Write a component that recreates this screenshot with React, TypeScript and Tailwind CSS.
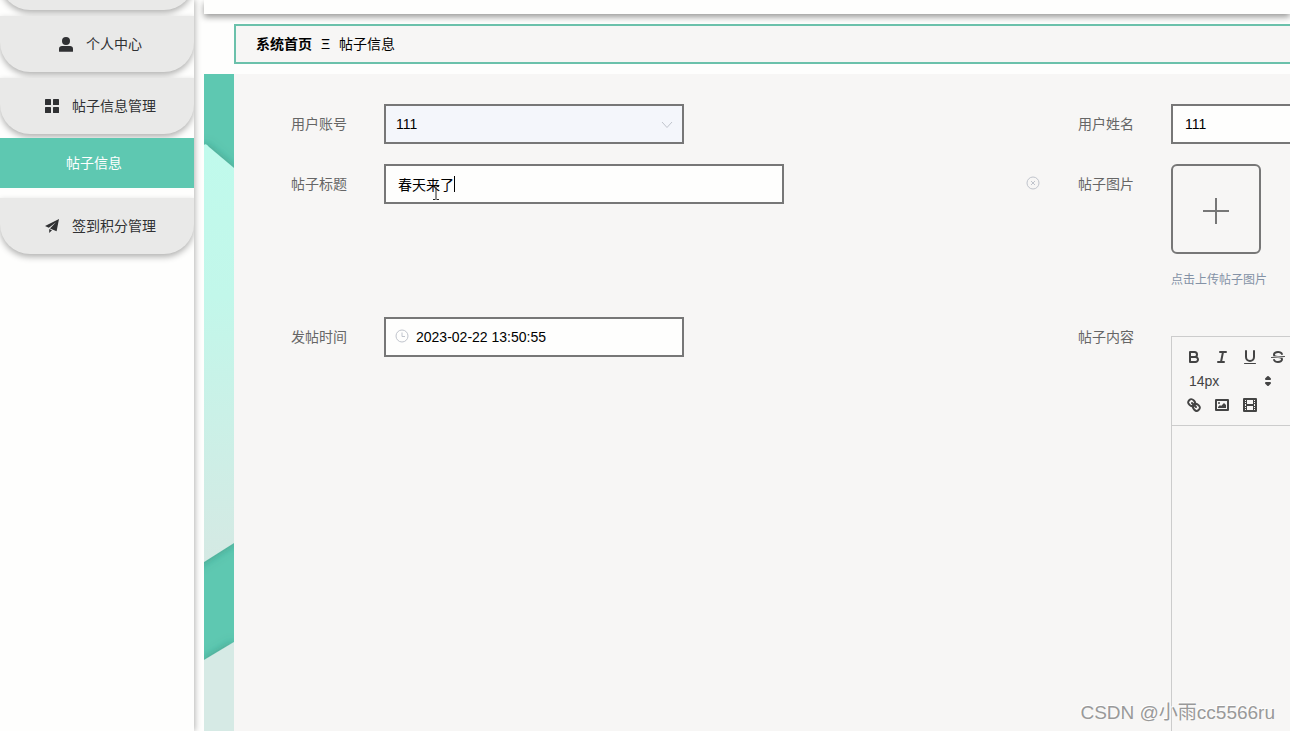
import React, { useState } from 'react';

const menuItems = [
  { label: '个人中心', icon: 'user' },
  { label: '帖子信息管理', icon: 'grid' },
];

const MenuIcon = ({ name }: { name: string }) => {
  if (name === 'user') {
    return (
      <svg viewBox="0 0 14 15" className="w-[14px] h-[15px]" fill="currentColor" aria-hidden="true">
        <circle cx="7" cy="4" r="4" />
        <path d="M0 14.2v-2.4C0 9.8 1.3 9 3 9h8c1.700 0 3 .8 3 2.800v2.400q0 .500-.500.500H.5q-.5 0-.5-.500Z" />
      </svg>
    );
  }
  if (name === 'grid') {
    return (
      <svg viewBox="0 0 14 14" className="w-[14px] h-[14px]" fill="currentColor" aria-hidden="true">
        <rect width="6" height="6" rx=".6" />
        <rect x="8" width="6" height="6" rx=".6" />
        <rect y="8" width="6" height="6" rx=".6" />
        <rect x="8" y="8" width="6" height="6" rx=".6" />
      </svg>
    );
  }
  return (
    <svg viewBox="0 0 14 14" className="w-[14px] h-[14px]" fill="currentColor" aria-hidden="true">
      <path d="M14 0 0 7l3.800 1.800L11 3.300 5 9.500l6.600 2.700ZM4.200 10v4l2.800-2.800Z" />
    </svg>
  );
};

const MenuItem = ({ label, icon }: { label: string; icon: string }) => (
  <li>
    <a
      href="#"
      className="flex items-center justify-center gap-[13px] h-14 pl-[7px] rounded-b-[30px] bg-[#e9e9e8] text-sm text-[#303133] shadow-[0_3px_6px_rgba(0,0,0,0.3)]"
    >
      <MenuIcon name={icon} />
      {label}
    </a>
  </li>
);

const Sidebar = () => (
  <aside className="w-[194px] shrink-0 bg-[#fefefd] shadow-[1px_0_6px_rgba(0,0,0,0.3)] z-10">
    <nav className="overflow-hidden pb-5" aria-label="后台菜单">
      <ul className="flex flex-col gap-[6px] -mt-[46px]">
        <li className="h-14 rounded-b-[30px] bg-[#e9e9e8] shadow-[0_3px_6px_rgba(0,0,0,0.3)]" />
        {menuItems.map((item) => (
          <MenuItem key={item.label} label={item.label} icon={item.icon} />
        ))}
      </ul>
      <a href="#" className="relative flex items-center justify-center h-[50px] mt-1 mb-[10px] pr-[6px] bg-[#5ec8b1] text-sm text-white">
        帖子信息
      </a>
      <ul>
        <MenuItem label="签到积分管理" icon="send" />
      </ul>
    </nav>
  </aside>
);

// green ribbon that runs down the left side of the content
const Ribbon = () => (
  <div className="w-[30px] shrink-0 bg-[#d6eae5]">
    <svg viewBox="0 0 30 657" className="block w-[30px] h-[657px]" aria-hidden="true">
      <defs>
        <linearGradient id="mint" x1="0" y1="0" x2="0" y2="1">
          <stop offset="0" stopColor="#c0faec" />
          <stop offset="0.35" stopColor="#c2f7ea" />
          <stop offset="1" stopColor="#d6e8e3" />
        </linearGradient>
        <filter id="ribbonShadow" x="-50%" y="-10%" width="200%" height="120%">
          <feDropShadow dx="0" dy="0" stdDeviation="5" floodColor="#1f6f5f" floodOpacity="0.5" />
        </filter>
      </defs>
      <rect width="30" height="657" fill="#5ec8b1" />
      <path d="M-30 96 L0 71 Q2 69 5 73 L30 94 V469 L0 488 L-30 507Z" fill="url(#mint)" filter="url(#ribbonShadow)" />
      <path d="M0 586 L30 568 V657 H0Z" fill="#d6eae5" filter="url(#ribbonShadow)" />
    </svg>
  </div>
);

type FieldProps = { label: string; htmlFor: string; children: React.ReactNode };

const Field = ({ label, htmlFor, children }: FieldProps) => (
  <div className="flex items-start">
    <label htmlFor={htmlFor} className="w-[83px] shrink-0 text-right text-sm leading-10 text-[#666]">
      {label}
    </label>
    <div className="relative flex-1 ml-[37px] min-w-0">{children}</div>
  </div>
);

const toolButton = 'flex items-center justify-center w-7 h-6 text-[#444]';

const ToolIcon = ({ children }: { children: React.ReactNode }) => (
  <svg
    viewBox="0 0 18 18"
    className="w-[18px] h-[18px] shrink-0"
    fill="none"
    stroke="currentColor"
    strokeWidth="2"
    strokeLinecap="round"
    strokeLinejoin="round"
    aria-hidden="true"
  >
    {children}
  </svg>
);

const Editor = () => (
  <div className="mt-[19px] w-[600px] border border-[#ccc] h-[500px]">
    <div className="p-2 border-b border-[#ccc]">
      <div className="flex">
        <button type="button" aria-label="加粗" className={toolButton}>
          <ToolIcon>
            <path d="M5,4H9.500A2.500,2.500,0,0,1,12,6.500v0A2.500,2.500,0,0,1,9.500,9H5V4Z" />
            <path d="M5,9h5.500A2.500,2.500,0,0,1,13,11.500v0A2.500,2.500,0,0,1,10.500,14H5V9Z" />
          </ToolIcon>
        </button>
        <button type="button" aria-label="斜体" className={toolButton}>
          <ToolIcon>
            <path d="M7 4h6M5 14h6M8 14 10 4" />
          </ToolIcon>
        </button>
        <button type="button" aria-label="下划线" className={toolButton}>
          <ToolIcon>
            <path d="M5,3V9a4.012,4.012,0,0,0,4,4H9a4.012,4.012,0,0,0,4-4V3" />
            <rect x="3" y="15" width="12" height="1" rx=".5" fill="currentColor" stroke="none" />
          </ToolIcon>
        </button>
        <button type="button" aria-label="删除线" className={toolButton}>
          <ToolIcon>
            <path d="M15.500 8.500 2.500 9.500" strokeWidth="1" />
            <g fill="currentColor" stroke="none">
              <path d="M9.007,8C6.542,7.791,6,7.519,6,6.500,6,5.792,7.283,5,9,5c1.571,0,2.765.679,2.969,1.309a1,1,0,0,0,1.900-.617C13.356,4.106,11.354,3,9,3,6.200,3,4,4.538,4,6.500a3.200,3.200,0,0,0,.500,1.843Z" />
              <path d="M8.984,10C11.457,10.208,12,10.479,12,11.500c0,.708-1.283,1.500-3,1.500-1.571,0-2.765-.679-2.969-1.309a1,1,0,1,0-1.900.617C4.644,13.894,6.646,15,9,15c2.800,0,5-1.538,5-3.500a3.200,3.200,0,0,0-.500-1.843Z" />
            </g>
          </ToolIcon>
        </button>
      </div>
      <div className="relative w-[98px] h-6 text-[#444]">
        <select aria-label="字号" defaultValue="14px" className="appearance-none w-full h-6 pl-[9px] text-sm leading-6 font-medium bg-transparent outline-none">
          <option>14px</option>
          <option>16px</option>
          <option>18px</option>
        </select>
        <svg viewBox="0 0 18 18" className="absolute right-px top-[3px] w-[18px] h-[18px] pointer-events-none" fill="currentColor" stroke="currentColor" strokeWidth="2" strokeLinejoin="round" aria-hidden="true">
          <path d="M7 11 9 13 11 11ZM7 7 9 5 11 7Z" />
        </svg>
      </div>
      <div className="flex">
        <button type="button" aria-label="链接" className={toolButton}>
          <ToolIcon>
            <path d="M7 7 11 11" />
            <path d="M8.900,4.577a3.476,3.476,0,0,1,.360,4.679A3.476,3.476,0,0,1,4.577,8.900C3.185,7.500,2.035,6.400,4.217,4.217S7.500,3.185,8.900,4.577Z" />
            <path d="M13.423,9.100a3.476,3.476,0,0,0-4.679-.360,3.476,3.476,0,0,0,.360,4.679c1.392,1.392,2.500,2.542,4.679.360S14.815,10.500,13.423,9.100Z" />
          </ToolIcon>
        </button>
        <button type="button" aria-label="图片" className={toolButton}>
          <ToolIcon>
            <rect x="3" y="4" width="12" height="10" />
            <circle cx="6" cy="7" r="1" fill="currentColor" stroke="none" />
            <path d="M5 12V11L7 9 8 10 11 7 13 9V12Z" fill="currentColor" stroke="none" />
          </ToolIcon>
        </button>
        <button type="button" aria-label="视频" className={toolButton}>
          <ToolIcon>
            <rect x="3" y="3" width="12" height="12" />
            <path d="M5 3h1v12H5ZM12 3h1v12h-1ZM5 8h8v2H5ZM3 5h3v1H3ZM3 7h3v1H3ZM3 10h3v1H3ZM3 12h3v1H3ZM12 5h3v1h-3ZM12 7h3v1h-3ZM12 10h3v1h-3ZM12 12h3v1h-3Z" fill="currentColor" stroke="none" />
          </ToolIcon>
        </button>
      </div>
    </div>
    <div id="content" role="textbox" aria-label="帖子内容" className="p-4 text-sm" />
  </div>
);

const PostForm = () => {
  const [title, setTitle] = useState('春天来了');
  const [time, setTime] = useState('2023-02-22 13:50:55');

  return (
    <form className="grid grid-cols-[787px_787px] gap-y-5 pl-[30px] pt-[30px]">
      <Field label="用户账号" htmlFor="account">
        <select id="account" defaultValue="111" className="block appearance-none w-[300px] h-10 pl-[10px] border-2 border-[#777] bg-[#f4f6fb] text-sm text-black outline-none">
          <option>111</option>
        </select>
        <svg viewBox="0 0 12 8" className="absolute left-[277px] top-[17px] w-3 h-2 pointer-events-none" fill="none" stroke="#c0c4cc" aria-hidden="true">
          <path d="M1 1 6 6.500 11 1" />
        </svg>
      </Field>
      <Field label="用户姓名" htmlFor="name">
        <input id="name" defaultValue="111" className="block w-[300px] h-10 px-3 border-2 border-[#777] bg-[#fefefd] text-sm text-black outline-none" />
      </Field>

      <Field label="帖子标题" htmlFor="title">
        <input
          id="title"
          value={title}
          onChange={(e) => setTitle(e.target.value)}
          className="block w-[400px] h-10 px-3 border-2 border-[#777] bg-[#fefefd] text-sm text-black outline-none"
        />
        {/* caret and pointer */}
        <span className="absolute left-[70px] top-3 w-px h-4 bg-black" />
        <svg viewBox="0 0 8 14" className="absolute left-12 top-[22px] w-2 h-[14px]" fill="none" stroke="#222" aria-hidden="true">
          <path d="M1 .500h2.500M4.500.500H7M4 1v12M1 13.500h2.500M4.500 13.500H7" />
        </svg>
        <button type="button" aria-label="清空" className="absolute right-[11px] top-3 text-[#c0c4cc]" onClick={() => setTitle('')}>
          <svg viewBox="0 0 14 14" className="w-[14px] h-[14px]" fill="none" stroke="currentColor" aria-hidden="true">
            <circle cx="7" cy="7" r="6" />
            <path d="M5 5 9 9M9 5 5 9" />
          </svg>
        </button>
      </Field>
      <Field label="帖子图片" htmlFor="upload">
        <button id="upload" type="button" aria-label="上传" className="flex items-center justify-center w-[90px] h-[90px] border-2 border-[#777] rounded-md">
          <svg viewBox="0 0 26 26" className="w-[26px] h-[26px] mt-1" stroke="#777" strokeWidth="2" aria-hidden="true">
            <path d="M13 0V26M0 13H26" />
          </svg>
        </button>
        <p className="mt-4 mb-[7px] text-xs leading-5 text-[#8492a6]">点击上传帖子图片</p>
      </Field>

      <Field label="发帖时间" htmlFor="time">
        <input
          id="time"
          value={time}
          onChange={(e) => setTime(e.target.value)}
          className="block w-[300px] h-10 pl-[30px] border-2 border-[#777] bg-[#fefefd] text-sm text-black outline-none"
        />
        <svg viewBox="0 0 14 14" className="absolute left-[11px] top-3 w-[14px] h-[14px]" fill="none" stroke="#c0c4cc" aria-hidden="true">
          <circle cx="7" cy="7" r="6" />
          <path d="M7 3.500V7.500H10" />
        </svg>
      </Field>
      <Field label="帖子内容" htmlFor="content">
        <Editor />
      </Field>
    </form>
  );
};

const App = () => {
  return (
    <div className="relative flex h-screen overflow-hidden bg-[#fefefd] font-['Liberation_Sans','Noto_Sans_CJK_SC',sans-serif]">
      <Sidebar />
      <main className="flex flex-col flex-1 min-w-0 ml-[10px]">
        <header className="h-[14px] shrink-0 bg-[#fefefd] shadow-[0_3px_6px_rgba(0,0,0,0.4)]" />
        <nav aria-label="面包屑" className="flex items-center gap-[9px] h-10 shrink-0 ml-[30px] my-[10px] pl-5 border-2 border-r-0 border-[#6bc1ab] bg-[#f7f6f5] text-sm text-black">
          <a href="#" className="font-bold">系统首页</a>
          <span>Ξ</span>
          <span>帖子信息</span>
        </nav>
        <div className="flex flex-1 min-h-0">
          <Ribbon />
          <section className="flex-1 min-w-0 overflow-hidden bg-[#f7f6f5]">
            <PostForm />
          </section>
        </div>
      </main>
      <p className="absolute right-[15px] bottom-1 text-[19px] leading-7 text-[#999] z-20 [text-shadow:-1px_-1px_0_#fff]">CSDN @小雨cc5566ru</p>
    </div>
  );
};

export default App;
